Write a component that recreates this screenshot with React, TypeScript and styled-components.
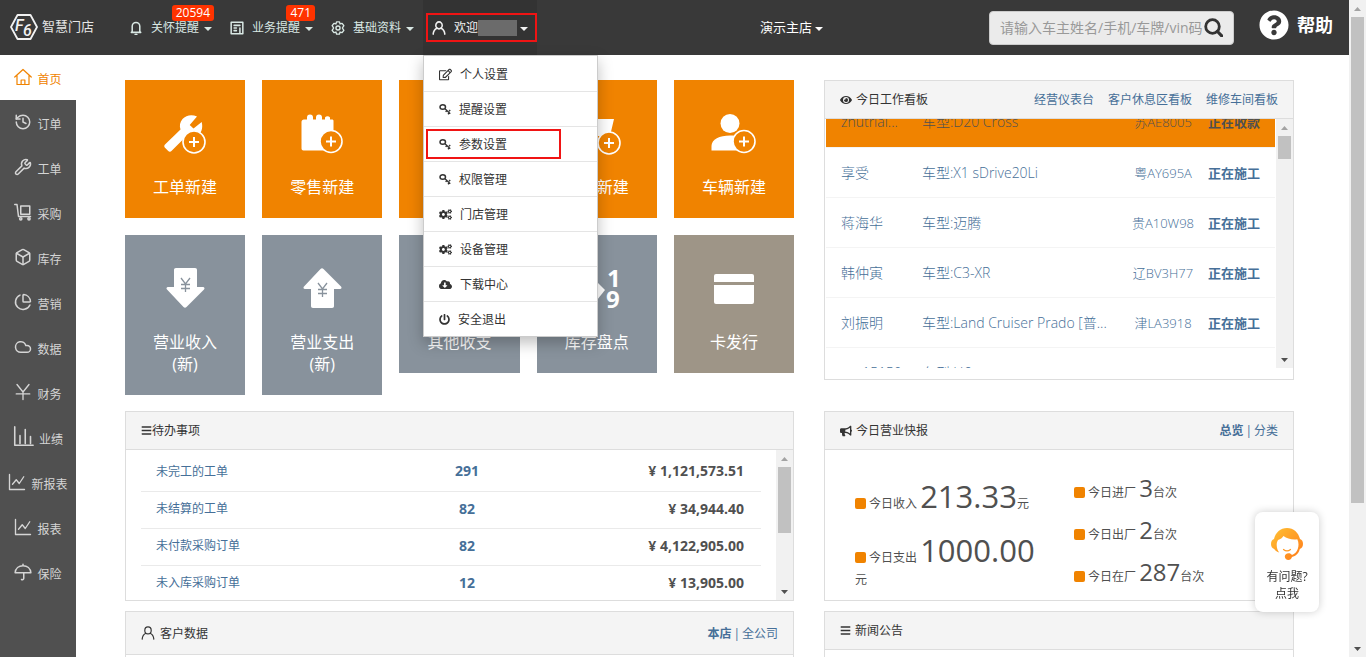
import React, { useLayoutEffect, useRef } from 'react';
import styled, { createGlobalStyle, css } from 'styled-components';
import { Box, ChartPie, Cloud, Wrench, History } from 'lucide-react';
import {
  FaBars,
  FaBullhorn,
  FaCloudDownloadAlt,
  FaCogs,
  FaEye,
  FaPowerOff,
  FaQuestionCircle,
  FaRegEdit,
} from 'react-icons/fa';

const color = {
  bar: '#393939',
  side: '#505050',
  orange: '#f08300',
  slate: '#88929c',
  taupe: '#9e9587',
  link: '#466f98',
  line: '#dddddd',
  head: '#f4f4f4',
  text: '#333333',
  alert: '#f01414',
};

const GlobalStyle = createGlobalStyle`
  * { box-sizing: border-box; }
  body {
    margin: 0;
    background: #fff;
    color: ${color.text};
    font: 12px/17px "Open Sans", "Noto Sans CJK SC", sans-serif;
  }
  a { color: inherit; text-decoration: none; }
  button, input { font: inherit; color: inherit; }
  button { background: none; border: 0; padding: 0; cursor: pointer; }
  ul { list-style: none; margin: 0; padding: 0; }
  h2, p { margin: 0; font: inherit; }
  svg { display: block; flex: none; }
`;

/* ---------- frame ---------- */

const Frame = styled.div`
  display: grid;
  grid-template-columns: minmax(0, 1fr) 17px;
  height: 100vh;
`;

const Page = styled.div`
  display: flex;
  flex-direction: column;
  overflow: hidden;
`;

const Columns = styled.div`
  display: flex;
  flex: 1 0 auto;
`;

/* ---------- scroll bar ---------- */

const Track = styled.div`
  display: flex;
  flex-direction: column;
  flex: none;
  width: 17px;
  background: #f1f1f1;
`;

const TrackEnd = styled.span`
  display: flex;
  align-items: center;
  justify-content: center;
  height: 17px;
`;

const TrackRun = styled.div`
  flex: 1;
  padding: 0 2px;
`;

const Thumb = styled.div<{ $size: string }>`
  height: ${p => p.$size};
  background: #c1c1c1;
`;

function ScrollBar({ size }: { size: string }) {
  return (
    <Track aria-hidden="true">
      <TrackEnd>
        <svg width="7" height="4" viewBox="0 0 7 4"><path d="M0 4 3.500 0 7 4z" fill="#a3a3a3" /></svg>
      </TrackEnd>
      <TrackRun><Thumb $size={size} /></TrackRun>
      <TrackEnd>
        <svg width="7" height="4" viewBox="0 0 7 4"><path d="M0 0h7L3.500 4z" fill="#505050" /></svg>
      </TrackEnd>
    </Track>
  );
}

/* ---------- top bar ---------- */

const TopBar = styled.header`
  display: flex;
  align-items: stretch;
  flex: none;
  height: 55px;
  padding: 0 16px 0 10px;
  background: ${color.bar};
  color: #fff;
`;

const Brand = styled.a`
  display: flex;
  align-items: center;
  gap: 4px;
  width: 110px;
  padding-bottom: 2px;
  color: #e6e6e6;
  font-size: 13px;
`;

const Nav = styled.nav`
  display: flex;
`;

const NavItem = styled.div`
  position: relative;
`;

const NavButton = styled.button<{ $open?: boolean }>`
  display: flex;
  align-items: center;
  height: 100%;
  padding: 0 9px;
  color: ${p => (p.$open ? '#f2f2f2' : '#d9e8e4')};
  background: ${p => (p.$open ? '#333333' : 'transparent')};
`;

const NavIcon = styled.span`
  display: flex;
  justify-content: center;
  width: 13px;
  margin-right: 9px;
`;

const Caret = styled.span<{ $tight?: boolean }>`
  margin: 3px 0 0 ${p => (p.$tight ? 3 : 5)}px;
  border: 4px solid transparent;
  border-top-color: currentColor;
  border-bottom: 0;
`;

const Badge = styled.span`
  position: absolute;
  top: 5px;
  right: 7px;
  padding: 0 4px;
  border-radius: 3px;
  background: #ff3300;
  color: #fff;
  line-height: 16px;
`;

const UserMask = styled.span`
  width: 39px;
  height: 16px;
  background: #6b6b6b;
`;

const mark = css`
  position: absolute;
  border: 2px solid ${color.alert};
  pointer-events: none;
`;

const NavMark = styled.span`
  ${mark}
  inset: 13px 0 13px 3px;
`;

const Tools = styled.div`
  display: flex;
  align-items: center;
  margin-left: auto;
`;

const StoreButton = styled.button`
  display: flex;
  align-items: center;
  margin-right: 166px;
  font-size: 13px;
`;

const Search = styled.form`
  display: flex;
  align-items: center;
  width: 245px;
  height: 34px;
  margin-right: 25px;
  padding: 0 10px;
  border: 1px solid #cccccc;
  border-radius: 4px;
  background: #ebebeb;
`;

const SearchInput = styled.input`
  flex: 1;
  min-width: 0;
  padding: 0;
  border: 0;
  outline: 0;
  background: none;
  color: ${color.text};
  font-size: 14px;
  &::placeholder { color: #999; opacity: 1; }
`;

const SearchButton = styled.button`
  color: #333;
`;

const Help = styled.a`
  display: flex;
  align-items: center;
  gap: 8px;
  padding-bottom: 5px;
  font-size: 18px;
  font-weight: 700;
`;

/* ---------- drop-down menu ---------- */

const Menu = styled.ul`
  position: absolute;
  z-index: 5;
  top: 55px;
  left: 0;
  width: 175px;
  padding-top: 1px;
  border: 1px solid #cccccc;
  background: #fff;
  color: ${color.text};
  box-shadow: 0 6px 14px rgba(0, 0, 0, 0.25);
`;

const MenuItem = styled.li`
  position: relative;
  & + & { border-top: 1px solid #e5e5e5; }
`;

const MenuLink = styled.a`
  display: flex;
  align-items: center;
  gap: 8px;
  height: 34px;
  padding-left: 15px;
`;

const MenuMark = styled.span`
  ${mark}
  inset: 2px 36px 2px 2px;
`;

/* ---------- side bar ---------- */

const SideBar = styled.nav`
  flex: none;
  width: 76px;
  background: ${color.side};
  color: #d5d5d5;
`;

const SideLink = styled.a<{ $active?: boolean }>`
  display: flex;
  align-items: center;
  justify-content: center;
  gap: 5px;
  height: 45px;
  padding-bottom: 2px;
  white-space: nowrap;
  ${p => p.$active && css`
    background: #fff;
    color: ${color.orange};
  `}
`;

const SideText = styled.span`
  padding-top: 6px;
`;

/* ---------- content ---------- */

const Content = styled.main`
  flex: 1;
  min-width: 0;
  padding: 25px 55px 0 49px;
`;

const Band = styled.div<{ $gap?: number }>`
  display: grid;
  grid-template-columns: minmax(0, 669fr) minmax(0, 470fr);
  align-items: start;
  gap: 30px;
  margin-top: ${p => p.$gap ?? 0}px;
`;

const Tiles = styled.div`
  display: grid;
  grid-template-columns: repeat(5, minmax(0, 1fr));
  align-items: start;
  gap: 17px;
`;

const Tile = styled.a<{ $tone: string }>`
  display: flex;
  flex-direction: column;
  align-items: center;
  gap: 18px;
  padding: 30px 20px 20px;
  background: ${p => p.$tone};
  color: #fff;
  font-size: 16px;
  line-height: 22px;
  text-align: center;
`;

const TileText = styled.span`
  white-space: pre-line;
`;

const Panel = styled.section`
  border: 1px solid ${color.line};
  background: #fff;
`;

const PanelHead = styled.header<{ $tall?: boolean }>`
  display: flex;
  align-items: center;
  height: ${p => (p.$tall ? 43 : 38)}px;
  padding: 0 15px;
  border-bottom: 1px solid ${color.line};
  background: ${color.head};
`;

const PanelTitle = styled.h2<{ $gap?: number }>`
  display: flex;
  align-items: center;
  gap: ${p => p.$gap ?? 4}px;
  margin-right: auto;
`;

const HeadLinks = styled.div<{ $gap?: number }>`
  display: flex;
  gap: ${p => p.$gap ?? 2}px;
  color: ${color.link};
`;

const ScrollArea = styled.div<{ $height: number }>`
  display: flex;
  height: ${p => p.$height}px;
`;

const Viewport = styled.div<{ $pad: string }>`
  flex: 1;
  min-width: 0;
  overflow: hidden;
  padding: ${p => p.$pad};
`;

const BoardBody = styled.div`
  padding-bottom: 11px;
`;

const BoardTable = styled.table`
  width: 100%;
  border-collapse: collapse;
  table-layout: fixed;
  color: ${color.link};
  font-size: 14px;
  font-weight: 300;
`;

const BoardRow = styled.tr<{ $hot?: boolean }>`
  height: 50px;
  border-bottom: 1px solid #f4f4f4;
  ${p => p.$hot && css`
    background: ${color.orange};
    color: #505050;
  `}
`;

const BoardCell = styled.td<{ $width?: number; $small?: boolean; $center?: boolean; $bold?: boolean }>`
  width: ${p => (p.$width ? `${p.$width}px` : 'auto')};
  padding: ${p => (p.$small ? '2px 0 0' : '0 0 0 15px')};
  overflow: hidden;
  text-overflow: ellipsis;
  white-space: nowrap;
  font-size: ${p => (p.$small ? 13 : 14)}px;
  font-weight: ${p => (p.$bold ? 700 : 300)};
  text-align: ${p => (p.$center ? 'center' : 'left')};
`;

const TodoTable = styled.table`
  width: 100%;
  border-collapse: collapse;
  table-layout: fixed;
`;

const TodoRow = styled.tr`
  height: 37px;
  border-bottom: 1px solid #eaeaea;
`;

const TodoName = styled.td`
  width: 50%;
  padding: 0 0 2px 15px;
  color: ${color.link};
`;

const TodoCount = styled.td`
  width: 32px;
  padding: 0 0 3px;
  color: ${color.link};
  font-size: 14px;
  font-weight: 700;
  text-align: center;
`;

const TodoSum = styled.td`
  padding: 0 17px 3px 0;
  color: #505050;
  font-size: 14px;
  font-weight: 700;
  text-align: right;
`;

const Stats = styled.div`
  display: grid;
  grid-template-columns: 1fr 1fr;
  height: 150px;
  padding: 0 15px;
  color: #505050;
`;

const StatColumn = styled.div<{ $gap: number; $top: number }>`
  display: flex;
  flex-direction: column;
  gap: ${p => p.$gap}px;
  padding: ${p => p.$top}px 15px 0;
`;

const Dot = styled.span`
  display: inline-block;
  width: 11px;
  height: 11px;
  margin-right: 3px;
  border-radius: 2px;
  background: ${color.orange};
  vertical-align: -1px;
`;

const Figure = styled.span<{ $large?: boolean }>`
  font-size: ${p => (p.$large ? 31 : 24)}px;
  line-height: ${p => (p.$large ? 42 : 34)}px;
`;

const Blank = styled.div`
  height: 160px;
`;

const HelpCard = styled.button`
  position: fixed;
  right: 47px;
  bottom: 45px;
  display: flex;
  flex-direction: column;
  align-items: center;
  gap: 8px;
  width: 64px;
  height: 100px;
  padding-top: 16px;
  border-radius: 8px;
  background: #fff;
  color: ${color.text};
  box-shadow: 0 0 8px rgba(0, 0, 0, 0.2);
`;

/* ---------- drawings ---------- */

function Line({ size = 18, width = 1.8, children }: { size?: number; width?: number; children: React.ReactNode }) {
  return (
    <svg
      width={size}
      height={size}
      viewBox="0 0 24 24"
      fill="none"
      stroke="currentColor"
      strokeWidth={width}
      strokeLinecap="round"
      strokeLinejoin="round"
      aria-hidden="true"
    >
      {children}
    </svg>
  );
}

const UserIcon = ({ width = 2.6 }: { width?: number }) => (
  <Line size={14} width={width}>
    <ellipse cx="12" cy="7.500" rx="5.500" ry="6" />
    <path d="M2 22.500c.5-5.500 3-8.500 6.500-10M22 22.500c-.5-5.500-3-8.500-6.500-10" />
  </Line>
);

const KeyIcon = () => (
  <svg width="12" height="12" viewBox="0 0 24 24" fill="none" stroke="#333" aria-hidden="true">
    <ellipse cx="7.500" cy="8" rx="5.500" ry="4.500" strokeWidth="3" />
    <path d="M12 11.500l10.500 10M15.500 14.500l-2 3.500M20 16.500l2.500-2.500M20 20l-2 2.500" strokeWidth="2.600" />
  </svg>
);

const SearchIcon = () => (
  <svg width="19" height="19" viewBox="0 0 19 19" fill="none" stroke="currentColor" aria-hidden="true">
    <circle cx="8.500" cy="8.500" r="6.800" strokeWidth="2.800" />
    <path d="M13.500 13.500l4.200 4.300" strokeWidth="3.200" strokeLinecap="round" />
  </svg>
);

const LogoMark = () => (
  <svg width="28" height="26" viewBox="0 0 28 26" fill="none" aria-hidden="true">
    <path d="M7.500 1h13L27 13l-6.500 12h-13L1 13z" stroke="#f2f2f2" strokeWidth="1.800" strokeLinejoin="round" />
    <g fill="#f2f2f2" fontFamily="Roboto, sans-serif" fontStyle="italic" fontWeight="500" fontSize="16">
      <text x="5" y="17">F</text>
      <text x="13" y="22">6</text>
    </g>
  </svg>
);

const Plus = ({ x, y }: { x: number; y: number }) => (
  <g>
    <circle cx={x} cy={y} r="11" fill={color.orange} stroke="#fff" strokeWidth="1.600" />
    <path d={`M${x - 5} ${y}h10M${x} ${y - 5}v10`} stroke="#fff" strokeWidth="2" />
  </g>
);

const tileArt: Record<string, React.ReactNode> = {
  wrench: (
    <>
      <path d="M36 6.500c-5-2.500-11-1.500-14.500 2.500-2.600 3-3.200 7-2 10.500L4 34.500c-1 1-1 2.300 0 3.300l3 3c1.200 1.200 2.600 1.200 3.700 0L25 26.500c6 2 13 .5 15.500-6 1-2.700.9-5.500.2-8.500l-8.200 6.500-3.800-3.500z" fill="#fff" />
      <Plus x={33} y={32} />
    </>
  ),
  parcel: (
    <>
      <path d="M6 9.500h3V7.500a3 3 0 0 1 6 0v2h3V7.500a3 3 0 0 1 6 0v2h3V7.500a3 3 0 0 1 5 0v2h2c1 0 1.500.5 1.500 1.500v29.500H5.500c-1.200 0-2-.8-2-2V12c0-1.500 1-2.500 2.500-2.500z" fill="#fff" />
      <Plus x={33} y={31.500} />
    </>
  ),
  cart: (
    <>
      <path d="M2 6h6l2 3h31l-4 17H12L8 9z" fill="#fff" />
      <Plus x={36} y={33} />
    </>
  ),
  person: (
    <>
      <circle cx="20" cy="13.500" r="9.500" fill="#fff" />
      <path d="M1.500 40.500V36c0-6.500 8-10.500 18.500-10.500 7 0 12 2 14 5v10z" fill="#fff" />
      <Plus x={34} y={31.500} />
    </>
  ),
  income: (
    <>
      <path d="M15 3h19c1.400 0 2 .7 2 2v17h6c1.500 0 2 1.500 1 2.600L25.500 42c-1 1-2 1-3 0L6 24.600C5 23.500 5.500 22 7 22h6V5c0-1.300.7-2 2-2z" fill="#fff" />
      <path d="M20 13l4.500 6 4.500-6M24.500 19v8M20 19.500h9M20 23.500h9" stroke={color.slate} strokeWidth="1.300" fill="none" />
    </>
  ),
  spend: (
    <>
      <path d="M15 43h19c1.400 0 2-.7 2-2V24h6c1.500 0 2-1.500 1-2.600L25.500 4c-1-1-2-1-3 0L6 21.400C5 22.500 5.500 24 7 24h6v17c0 1.300.7 2 2 2z" fill="#fff" />
      <path d="M20 18l4.500 6 4.500-6M24.500 24v8M20 24.500h9M20 28.500h9" stroke={color.slate} strokeWidth="1.300" fill="none" />
    </>
  ),
  count: (
    <>
      <path d="M25 18l7 7-8 10-12-8z" fill="#fff" />
      <g fill="#fff" fontFamily="Open Sans, sans-serif" fontWeight="700" fontSize="24">
        <text x="34" y="22">1</text>
        <text x="33" y="43">9</text>
      </g>
    </>
  ),
  card: (
    <>
      <path d="M6 9h36q2 0 2 2v6H4v-6q0-2 2-2z" fill="#fff" />
      <path d="M4 20h40v17q0 2-2 2H6q-2 0-2-2z" fill="#fff" />
    </>
  ),
};

const HeadsetGirl = () => (
  <svg width="32" height="32" viewBox="0 0 32 32" fill="none" aria-hidden="true">
    <defs>
      <linearGradient id="hair" x1="0" y1="0" x2="1" y2="1">
        <stop offset="0" stopColor="#ffc233" />
        <stop offset="1" stopColor="#ff7a1a" />
      </linearGradient>
    </defs>
    <path
      d="M3 11C4.500 4.500 9.500 0 16 0s11.500 4.500 13 11c2 .7 3 2.500 3 5s-1.200 4.500-3.200 5c-1 4.500-4 7-7.800 8-.6 1.800-1.900 3-3.500 3-2.200 0-3.700-1.500-3.700-3.400s1.600-3.300 3.700-3.300c1.500 0 2.800.7 3.400 1.600 1.400-.4 2.600-1.200 3.600-2.200 2-2.300 3-5 3-8.200 0-2-.4-3.700-1.200-5.300-5.300.8-10.300-.7-13.800-3.200-1.200 2-3 3.200-5.500 4-.9 1.500-1.300 3-1.300 5 0 3 1 5.700 2.500 7.500C6.500 24 4.200 22.800 3.200 21 1.200 20.500 0 18.500 0 16s1-4.300 3-5z"
      fill="url(#hair)"
    />
    <path d="M12.500 21.500c2 1.600 5 1.600 7 0" stroke="#ff9a26" strokeWidth="1.200" strokeLinecap="round" />
  </svg>
);

/* ---------- data ---------- */

const sideItems: { text: string; icon: React.ReactNode }[] = [
  { text: '首页', icon: <Line width={1.600}><path d="M1 12 12 2l11 10M4 10v12h16V10M9.500 22v-6h5v6" /></Line> },
  { text: '订单', icon: <History size={18} strokeWidth={2} /> },
  { text: '工单', icon: <Wrench size={18} strokeWidth={2} /> },
  {
    text: '采购',
    icon: (
      <Line width={2}>
        <path d="M1 2h3l2 16h16M9 4h12v11H9z" />
        <circle cx="9" cy="21" r="1.500" />
        <circle cx="20" cy="21" r="1.500" />
      </Line>
    ),
  },
  { text: '库存', icon: <Box size={18} strokeWidth={2} /> },
  { text: '营销', icon: <ChartPie size={18} strokeWidth={2} /> },
  { text: '数据', icon: <Cloud size={18} strokeWidth={2} /> },
  { text: '财务', icon: <Line><path d="M4 2l8 10 8-10M12 12v10M3 14.500h18" /></Line> },
  { text: '业绩', icon: <Line size={21}><path d="M2 1v21h21M8 11v9M14 4v16M20 12v8" /></Line> },
  { text: '新报表', icon: <Line><path d="M2 2v20h20M6 15l5-6 4 5 6-9" /></Line> },
  { text: '报表', icon: <Line><path d="M2 2v20h20M6 15l5-6 4 5 6-9" /></Line> },
  { text: '保险', icon: <Line width={2}><path d="M1.500 13C2 7 6.500 3.500 12 3.500S22 7 22.500 13zM12 1.500v2M13 13v7.500a2 2 0 0 1-3 1.500" /></Line> },
];

const tiles = [
  { text: '工单新建', art: 'wrench', tone: color.orange },
  { text: '零售新建', art: 'parcel', tone: color.orange },
  { text: '客户新建', art: 'person', tone: color.orange },
  { text: '采购新建', art: 'cart', tone: color.orange },
  { text: '车辆新建', art: 'person', tone: color.orange },
  { text: '营业收入\n(新)', art: 'income', tone: color.slate },
  { text: '营业支出\n(新)', art: 'spend', tone: color.slate },
  { text: '其他收支', art: 'income', tone: color.slate },
  { text: '库存盘点', art: 'count', tone: color.slate },
  { text: '卡发行', art: 'card', tone: color.taupe },
];

const menuItems: { text: string; icon: React.ReactNode; marked?: boolean }[] = [
  { text: '个人设置', icon: <FaRegEdit size={13} /> },
  { text: '提醒设置', icon: <KeyIcon /> },
  { text: '参数设置', icon: <KeyIcon />, marked: true },
  { text: '权限管理', icon: <KeyIcon /> },
  { text: '门店管理', icon: <FaCogs size={13} /> },
  { text: '设备管理', icon: <FaCogs size={13} /> },
  { text: '下载中心', icon: <FaCloudDownloadAlt size={13} /> },
  { text: '安全退出', icon: <FaPowerOff size={11} /> },
];

const jobs = [
  { name: 'zhutrial...', model: '车型:D20 Cross', plate: '苏AE8005', state: '正在收款', hot: true },
  { name: '享受', model: '车型:X1 sDrive20Li', plate: '粤AY695A', state: '正在施工' },
  { name: '蒋海华', model: '车型:迈腾', plate: '贵A10W98', state: '正在施工' },
  { name: '韩仲寅', model: '车型:C3-XR', plate: '辽BV3H77', state: '正在施工' },
  { name: '刘振明', model: '车型:Land Cruiser Prado [普...', plate: '津LA3918', state: '正在施工' },
  { name: 'xxx15150', model: '车型:H6 五', plate: '', state: '' },
];

const todos = [
  { name: '未完工的工单', count: '291', sum: '¥ 1,121,573.51' },
  { name: '未结算的工单', count: '82', sum: '¥ 34,944.40' },
  { name: '未付款采购订单', count: '82', sum: '¥ 4,122,905.00' },
  { name: '未入库采购订单', count: '12', sum: '¥ 13,905.00' },
];

const visits = [
  { label: '今日进厂', value: '3' },
  { label: '今日出厂', value: '2' },
  { label: '今日在厂', value: '287' },
];

/* ---------- parts ---------- */

function Header() {
  return (
    <TopBar>
      <Brand href="#"><LogoMark />智慧门店</Brand>
      <Nav>
        <NavItem>
          <NavButton type="button">
            <NavIcon>
              <Line size={14} width={2.600}><path d="M5.500 18V9a6.500 6.500 0 0 1 13 0v9l1.500 1.500H4zM10.500 23h3" /></Line>
            </NavIcon>
            关怀提醒<Caret />
          </NavButton>
          <Badge>20594</Badge>
        </NavItem>
        <NavItem>
          <NavButton type="button">
            <NavIcon>
              <Line size={14} width={2.600}><path d="M2 2h20v20H2zM7 7.500h10M7 12h4M7 16.500h4M17 12v10" /></Line>
            </NavIcon>
            业务提醒<Caret />
          </NavButton>
          <Badge>471</Badge>
        </NavItem>
        <NavItem>
          <NavButton type="button">
            <NavIcon>
              <Line size={14} width={2.400}>
                <path d="M9.500 1.500h5l1 3.500 3.500-1 3 4-2.500 4 2.500 4-3 4-3.500-1-1 3.500h-5l-1-3.500-3.500 1-3-4 2.500-4-2.500-4 3-4 3.500 1z" />
                <circle cx="12" cy="12" r="3.500" />
              </Line>
            </NavIcon>
            基础资料<Caret />
          </NavButton>
        </NavItem>
        <NavItem>
          <NavButton type="button" $open aria-expanded="true">
            <NavIcon><UserIcon /></NavIcon>
            欢迎<UserMask /><Caret $tight />
          </NavButton>
          <NavMark />
          <Menu>
            {menuItems.map(item => (
              <MenuItem key={item.text}>
                <MenuLink href="#">{item.icon}{item.text}</MenuLink>
                {item.marked && <MenuMark />}
              </MenuItem>
            ))}
          </Menu>
        </NavItem>
      </Nav>
      <Tools>
        <StoreButton type="button">演示主店<Caret $tight /></StoreButton>
        <Search onSubmit={e => e.preventDefault()}>
          <SearchInput type="text" aria-label="搜索" placeholder="请输入车主姓名/手机/车牌/vin码" />
          <SearchButton type="submit" aria-label="搜索"><SearchIcon /></SearchButton>
        </Search>
        <Help href="#"><FaQuestionCircle size={30} />帮助</Help>
      </Tools>
    </TopBar>
  );
}

function WorkBoard() {
  const view = useRef<HTMLDivElement>(null);
  useLayoutEffect(() => {
    if (view.current) view.current.scrollTop = 22;
  }, []);
  return (
    <Panel>
      <PanelHead>
        <PanelTitle><FaEye size={12} />今日工作看板</PanelTitle>
        <HeadLinks $gap={14}>
          <a href="#">经营仪表台</a>
          <a href="#">客户休息区看板</a>
          <a href="#">维修车间看板</a>
        </HeadLinks>
      </PanelHead>
      <BoardBody>
        <ScrollArea $height={249}>
          <Viewport ref={view} $pad="0 1px">
            <BoardTable>
              <tbody>
                {jobs.map(job => (
                  <BoardRow key={job.name} $hot={job.hot}>
                    <BoardCell $width={81}>{job.name}</BoardCell>
                    <BoardCell>{job.model}</BoardCell>
                    <BoardCell $width={90} $small $center>{job.plate}</BoardCell>
                    <BoardCell $width={67} $small $bold>{job.state}</BoardCell>
                  </BoardRow>
                ))}
              </tbody>
            </BoardTable>
          </Viewport>
          <ScrollBar size="23px" />
        </ScrollArea>
      </BoardBody>
    </Panel>
  );
}

function TodoPanel() {
  return (
    <Panel>
      <PanelHead>
        <PanelTitle $gap={0}><FaBars size={11} />待办事项</PanelTitle>
      </PanelHead>
      <ScrollArea $height={150}>
        <Viewport $pad="4px 15px 0">
          <TodoTable>
            <tbody>
              {todos.map(todo => (
                <TodoRow key={todo.name}>
                  <TodoName><a href="#">{todo.name}</a></TodoName>
                  <TodoCount>{todo.count}</TodoCount>
                  <TodoSum>{todo.sum}</TodoSum>
                </TodoRow>
              ))}
            </tbody>
          </TodoTable>
        </Viewport>
        <ScrollBar size="66px" />
      </ScrollArea>
    </Panel>
  );
}

function BusinessPanel() {
  return (
    <Panel>
      <PanelHead>
        <PanelTitle><FaBullhorn size={12} />今日营业快报</PanelTitle>
        <HeadLinks><a href="#"><b>总览</b></a>|<a href="#">分类</a></HeadLinks>
      </PanelHead>
      <Stats>
        <StatColumn $gap={12} $top={25}>
          <p><Dot />今日收入 <Figure $large>213.33</Figure>元</p>
          <p><Dot />今日支出 <Figure $large>1000.00</Figure>元</p>
        </StatColumn>
        <StatColumn $gap={8} $top={21}>
          {visits.map(v => (
            <p key={v.label}><Dot />{v.label} <Figure>{v.value}</Figure>台次</p>
          ))}
        </StatColumn>
      </Stats>
    </Panel>
  );
}

export default function App() {
  return (
    <Frame>
      <GlobalStyle />
      <Page>
        <Header />
        <Columns>
          <SideBar>
            {sideItems.map((item, i) => (
              <SideLink key={item.text} href="#" $active={i === 0}>
                {item.icon}
                <SideText>{item.text}</SideText>
              </SideLink>
            ))}
          </SideBar>
          <Content>
            <Band>
              <Tiles>
                {tiles.map(tile => (
                  <Tile key={tile.text} href="#" $tone={tile.tone}>
                    <svg width="48" height="48" viewBox="0 0 48 48" aria-hidden="true">{tileArt[tile.art]}</svg>
                    <TileText>{tile.text}</TileText>
                  </Tile>
                ))}
              </Tiles>
              <WorkBoard />
            </Band>
            <Band $gap={16}>
              <TodoPanel />
              <BusinessPanel />
            </Band>
            <Band $gap={10}>
              <Panel>
                <PanelHead $tall>
                  <PanelTitle $gap={5}><UserIcon width={2} />客户数据</PanelTitle>
                  <HeadLinks><a href="#"><b>本店</b></a>|<a href="#">全公司</a></HeadLinks>
                </PanelHead>
                <Blank />
              </Panel>
              <Panel>
                <PanelHead>
                  <PanelTitle><FaBars size={11} />新闻公告</PanelTitle>
                </PanelHead>
                <Blank />
              </Panel>
            </Band>
          </Content>
        </Columns>
      </Page>
      <ScrollBar size="78%" />
      <HelpCard type="button">
        <HeadsetGirl />
        <span>有问题?<br />点我</span>
      </HelpCard>
    </Frame>
  );
}
